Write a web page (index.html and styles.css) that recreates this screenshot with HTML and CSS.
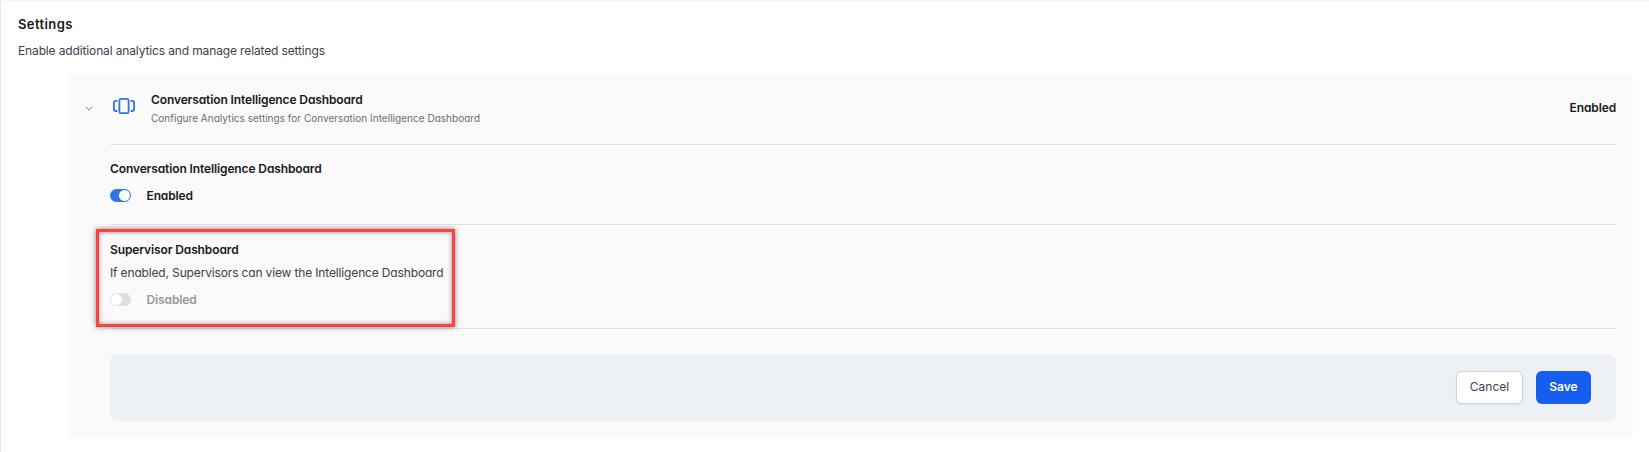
FILE: index.html
```html
<!DOCTYPE html>
<html lang="en">
<head>
<meta charset="utf-8">
<title>Settings</title>
<link rel="stylesheet" href="styles.css">
</head>
<body>
<main class="page">
  <h1 class="page-title">Settings</h1>
  <p class="page-sub">Enable additional analytics and manage related settings</p>
  <section class="panel">
    <header class="panel-head">
      <svg class="chevron" width="8" height="5" viewBox="0 0 8 5"><path d="M.8.8L4 4 7.200.8" fill="none" stroke="#7d8187"/></svg>
      <svg class="carousel" width="22" height="16" viewBox="0 0 22 16" fill="none" stroke="#2f75e6" stroke-width="1.8"><rect x="6.400" y=".9" width="9.200" height="14.200" rx="1.400"/><path d="M4.200 3H3Q.9 3 .9 5v6q0 2 2.100 2h1.200M17.800 3H19q2.100 0 2.100 2v6q0 2-2.100 2h-1.200"/></svg>
      <div class="head-text">
        <h2 class="label">Conversation Intelligence Dashboard</h2>
        <p class="note">Configure Analytics settings for Conversation Intelligence Dashboard</p>
      </div>
      <span class="label status">Enabled</span>
    </header>
    <div class="setting">
      <h3 class="label">Conversation Intelligence Dashboard</h3>
      <div class="switch-row"><span class="switch on"></span><span class="label">Enabled</span></div>
    </div>
    <div class="setting supervisor">
      <h3 class="label">Supervisor Dashboard</h3>
      <p class="desc">If enabled, Supervisors can view the Intelligence Dashboard</p>
      <div class="switch-row"><span class="switch"></span><span class="label off">Disabled</span></div>
      <div class="highlight"></div>
    </div>
    <footer class="actions">
      <button class="btn cancel">Cancel</button>
      <button class="btn save">Save</button>
    </footer>
  </section>
</main>
</body>
</html>
```
FILE: styles.css
```css
* { box-sizing: border-box; }
body, h1, h2, h3, p { margin: 0; }
body {
  background: #fff;
  font-family: Inter, "Liberation Sans", sans-serif;
  color: #17191c;
  white-space: nowrap;
  overflow: hidden;
}
.page {
  height: 452px;
  border-left: 1px solid #e6e6ef;
  border-top: 1px solid #f5f5f6;
  padding: 15px 16px 0 17px;
}
.page-title { font-size: 13px; line-height: 16px; font-weight: 600; letter-spacing: .4px; }
.page-sub { margin-top: 11px; font-size: 12px; line-height: 16px; letter-spacing: -.135px; color: #3d4148; }
.panel {
  margin: 15px 0 0 50px;
  height: 364px;
  padding: 0 17px 0 42px;
  background: #fafafa;
  border-radius: 4px;
  font-feature-settings: "cv11";
}
.panel-head {
  display: flex;
  align-items: flex-start;
  height: 71px;
  border-bottom: 1px solid #e3e3e4;
}
.chevron { margin: 32px 0 0 -25px; }
.carousel { margin: 24px 0 0 20px; }
.head-text { flex: 1; margin: 18px 0 0 16px; }
.label { display: block; font-size: 12px; line-height: 16px; font-weight: 560; letter-spacing: -.12px; }
.note { margin-top: 3px; font-size: 10px; line-height: 14px; letter-spacing: .02px; color: #696d73; }
.status { margin-top: 26px; }
.setting { height: 80px; padding-top: 16px; border-bottom: 1px solid #e3e3e4; }
.switch-row { display: flex; align-items: flex-start; gap: 15.5px; margin-top: 11px; }
.switch {
  width: 21px;
  height: 13px;
  margin-top: 1px;
  padding: 1px;
  border-radius: 7px;
  background: #dcdfe3;
}
.switch::before {
  content: "";
  display: block;
  width: 11px;
  height: 11px;
  border-radius: 50%;
  background: #fff;
}
.switch.on { background: #2f75e6; }
.switch.on::before { margin-left: 8px; }
.supervisor { position: relative; height: 104px; padding-top: 17px; }
.desc { margin-top: 7px; font-size: 12px; line-height: 16px; letter-spacing: -.15px; color: #3d4148; }
.off { color: #97999d; }
.highlight {
  position: absolute;
  left: -14px;
  top: 4px;
  width: 359px;
  height: 98px;
  border: 3px solid #fb4141;
  box-shadow: 0 0 5px rgba(0, 0, 0, .5), inset 0 0 5px rgba(0, 0, 0, .4);
}
.actions {
  display: flex;
  justify-content: flex-end;
  gap: 13px;
  height: 67px;
  margin-top: 25px;
  padding: 17px 25px;
  background: #edf1f6;
  border-radius: 8px;
}
.btn {
  height: 33px;
  padding: 0 0 1px;
  border-radius: 6px;
  font: 400 12px/16px Inter, sans-serif;
  font-feature-settings: normal;
}
.cancel { width: 67px; border: 1px solid #cfd3dd; background: #fff; color: #3d4255; box-shadow: 0 1px 2px rgba(16, 24, 40, .08); }
.save { width: 55px; border: 0; background: #155eef; color: #fff; font-weight: 600; }
```
